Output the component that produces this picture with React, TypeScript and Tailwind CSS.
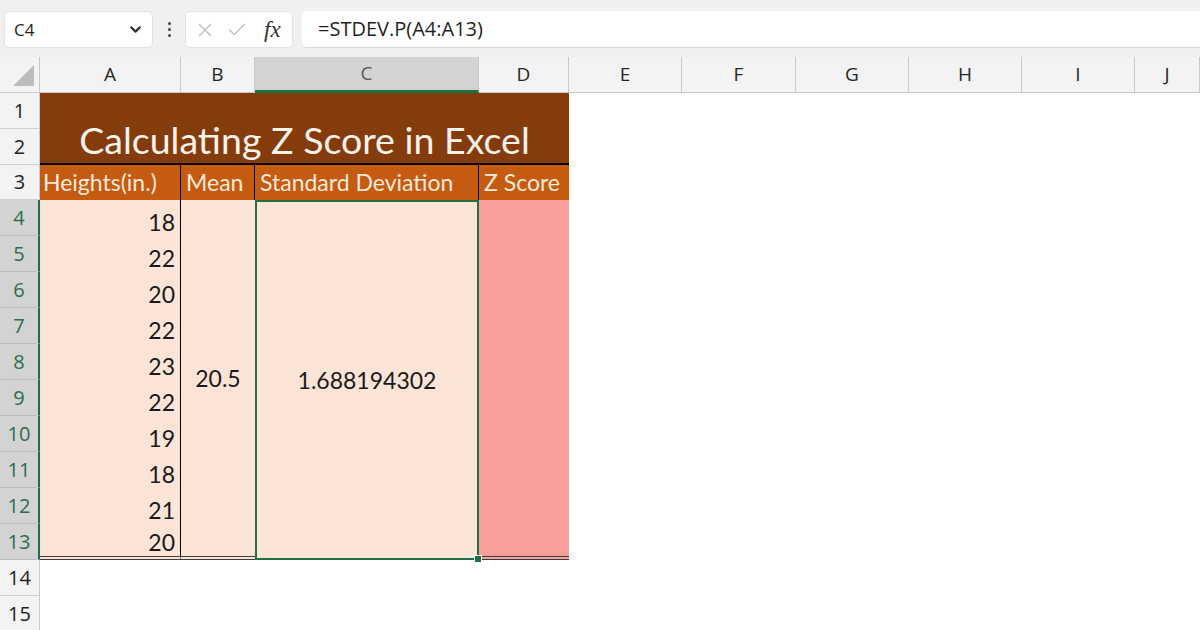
import { ChevronDown, X, Check } from "lucide-react";

const cellFont = { fontFamily: "Lato, 'Open Sans', sans-serif" };

const heights = [
  { v: 18, cls: "row-start-5" },
  { v: 22, cls: "row-start-6" },
  { v: 20, cls: "row-start-7" },
  { v: 22, cls: "row-start-8" },
  { v: 23, cls: "row-start-9" },
  { v: 22, cls: "row-start-10" },
  { v: 19, cls: "row-start-11" },
  { v: 18, cls: "row-start-12" },
  { v: 21, cls: "row-start-13" },
  { v: 20, cls: "row-start-14" },
];

const columns = [
  { l: "A", cls: "col-start-2" },
  { l: "B", cls: "col-start-3" },
  { l: "C", cls: "col-start-4", sel: true },
  { l: "D", cls: "col-start-5" },
  { l: "E", cls: "col-start-6" },
  { l: "F", cls: "col-start-7" },
  { l: "G", cls: "col-start-8" },
  { l: "H", cls: "col-start-9" },
  { l: "I", cls: "col-start-10" },
  { l: "J", cls: "col-start-11" },
];

const rowHeads = [
  { n: 1, cls: "row-start-2" },
  { n: 2, cls: "row-start-3" },
  { n: 3, cls: "row-start-4" },
  { n: 4, cls: "row-start-5", sel: true },
  { n: 5, cls: "row-start-6", sel: true },
  { n: 6, cls: "row-start-7", sel: true },
  { n: 7, cls: "row-start-8", sel: true },
  { n: 8, cls: "row-start-9", sel: true },
  { n: 9, cls: "row-start-10", sel: true },
  { n: 10, cls: "row-start-11", sel: true },
  { n: 11, cls: "row-start-12", sel: true },
  { n: 12, cls: "row-start-13", sel: true },
  { n: 13, cls: "row-start-14", sel: true },
  { n: 14, cls: "row-start-15" },
  { n: 15, cls: "row-start-16" },
];

export default function App() {
  return (
    <div className="w-[1200px] h-[630px] overflow-hidden bg-white" style={{ fontFamily: "'Open Sans', 'Noto Sans', sans-serif" }}>
      {/* formula bar */}
      <div className="h-[57px] bg-[#f0f0f0] flex items-start pt-[11px] pl-[4px]">
        <div className="w-[149px] h-[37px] bg-white rounded-[5px] border border-[#e3e3e3] flex items-center justify-between pl-[9px] pr-[8px]">
          <span className="text-[17px] text-[#1f1f1f]">C4</span>
          <ChevronDown size={17} strokeWidth={3} className="text-[#333]" />
        </div>
        <div className="w-[32px] h-[37px] flex flex-col items-center justify-center gap-[3px]">
          <div className="w-[3px] h-[3px] rounded-full bg-[#444]" />
          <div className="w-[3px] h-[3px] rounded-full bg-[#444]" />
          <div className="w-[3px] h-[3px] rounded-full bg-[#444]" />
        </div>
        <div className="w-[108px] h-[37px] bg-white rounded-[5px] border border-[#e3e3e3] flex items-center pl-[8px] gap-[10px]">
          <X size={22} strokeWidth={1.3} className="text-[#b9b9b9]" />
          <Check size={22} strokeWidth={1.3} className="text-[#b9b9b9]" />
          <span className="ml-[6px] text-[23px] italic text-[#333] leading-none" style={{ fontFamily: "'Liberation Serif', serif" }}>fx</span>
        </div>
        <div className="ml-[9px] flex-1 h-[37px] bg-white border-b border-[#d8d8d8] rounded-l-[5px] flex items-center pl-[16px]">
          <span className="text-[20px] text-[#1f1f1f]">=STDEV.P(A4:A13)</span>
        </div>
      </div>

      {/* sheet */}
      <div className="grid grid-cols-[40px_141px_74px_224px_90px_113px_114px_113px_113px_113px_1fr] grid-rows-[36px_36px_36px_35px_repeat(10,36px)_36px_36px]">
        {/* corner */}
        <div className="col-start-1 row-start-1 bg-[#f3f3f3] border-b border-r border-[#c9c9c9] relative">
          <svg className="absolute right-[4px] bottom-[5px]" width="22" height="22" viewBox="0 0 22 22">
            <polygon points="21,0 21,21 0,21" fill="#bdbdbd" />
          </svg>
        </div>

        {columns.map((c) => (
          <div
            key={c.l}
            className={`${c.cls} row-start-1 flex items-center justify-center text-[19px] ${
              c.sel
                ? "bg-[#d3d3d3] border-b-[3px] border-b-[#1e7145] text-[#5a5a5a] border-r border-r-[#c9c9c9]"
                : "bg-[#f3f3f3] border-b border-b-[#c9c9c9] text-[#262626] border-r border-r-[#c9c9c9]"
            }`}
          >
            {c.l}
          </div>
        ))}

        {rowHeads.map((r) => (
          <div
            key={r.n}
            className={`${r.cls} col-start-1 flex items-center justify-center text-[20px] border-b ${
              r.sel
                ? "bg-[#d3d3d3] text-[#2b6e4c] border-b-[#bdbdbd] border-r-2 border-r-[#1e7145]"
                : "bg-[#f3f3f3] text-[#222] border-b-[#d0d0d0] border-r border-r-[#c9c9c9]"
            }`}
          >
            {r.n}
          </div>
        ))}

        {/* title */}
        <div
          className="col-start-2 col-span-4 row-start-2 row-span-2 bg-[#843c0c] border-b-2 border-black flex items-end justify-center pb-[1px]"
          style={cellFont}
        >
          <span className="text-[37.5px] leading-[44px] text-[#fdf3ec]">Calculating Z Score in Excel</span>
        </div>

        {/* headers */}
        <div className="col-start-2 row-start-4 bg-[#c55a11] border-r border-black flex items-center pl-[3px] text-[23px] text-[#fce9da]" style={cellFont}>
          Heights(in.)
        </div>
        <div className="col-start-3 row-start-4 bg-[#c55a11] border-r border-black flex items-center pl-[5px] text-[23px] text-[#fce9da]" style={cellFont}>
          Mean
        </div>
        <div className="col-start-4 row-start-4 bg-[#c55a11] border-r border-black flex items-center pl-[5px] text-[23px] text-[#fce9da]" style={cellFont}>
          Standard Deviation
        </div>
        <div className="col-start-5 row-start-4 bg-[#c55a11] flex items-center pl-[5px] text-[23px] text-[#fce9da]" style={cellFont}>
          Z Score
        </div>

        {/* data */}
        {heights.map((h, i) => (
          <div
            key={i}
            className={`${h.cls} col-start-2 bg-[#fce4d6] border-r border-black flex items-end justify-end pr-[5px] text-[23px] leading-[28px] text-[#1a1a1a] ${
              i === 9 ? "border-b-4 border-b-[#3c3c3c] border-double" : ""
            }`}
            style={cellFont}
          >
            {h.v}
          </div>
        ))}
        <div className="col-start-3 row-start-5 row-span-10 bg-[#fce4d6] border-b-4 border-double border-b-[#3c3c3c] flex items-center justify-center text-[23px] text-[#1a1a1a]" style={cellFont}>
          20.5
        </div>
        <div className="col-start-4 row-start-5 row-span-10 bg-[#fce4d6] border-2 border-[#1e7145] flex items-center justify-center text-[23px] text-[#1a1a1a] relative" style={cellFont}>
          1.688194302
          <div className="absolute -right-[5px] -bottom-[5px] w-[8px] h-[8px] bg-[#1e7145] border border-white" />
        </div>
        <div className="col-start-5 row-start-5 row-span-10 bg-[#f8a19b] border-b-4 border-double border-b-[#3c3c3c]" />
      </div>
    </div>
  );
}
